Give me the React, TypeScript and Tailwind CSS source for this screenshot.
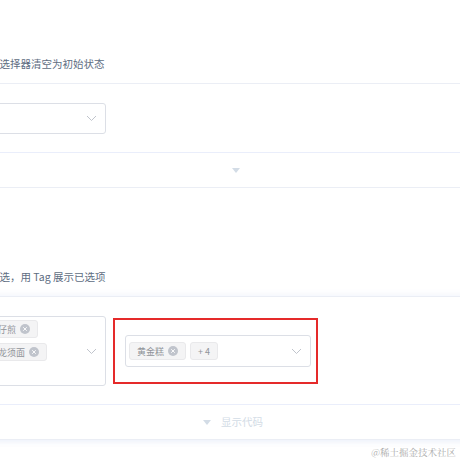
import React from 'react';

const border = 'border-[#ebeef5]';

function Chevron() {
  return (
    <svg width="11" height="7" viewBox="0 0 11 7" fill="none">
      <polyline points="1,1 5.5,5.5 10,1" stroke="#c0c4cc" strokeWidth="1" />
    </svg>
  );
}

function Tag({ label, closable = true }: { label: string; closable?: boolean }) {
  return (
    <span className="inline-flex items-center h-[18px] px-[7px] gap-[4px] rounded-[3px] border border-[#e9e9eb] bg-[#f4f4f5] text-[9px] leading-none text-[#909399] whitespace-nowrap">
      {label}
      {closable && (
        <span className="flex items-center justify-center w-[10px] h-[10px] rounded-full bg-[#c0c4cc]">
          <svg width="6" height="6" viewBox="0 0 6 6">
            <path d="M1.2 1.2L4.8 4.8M4.8 1.2L1.2 4.8" stroke="#fff" strokeWidth="0.9" />
          </svg>
        </span>
      )}
    </span>
  );
}

function ControlBar({ hover }: { hover?: boolean }) {
  return (
    <div className="h-[35px] border-t border-[#eaeefb] flex items-center justify-center">
      <div className={hover ? 'flex items-center gap-[10px] pr-[6px]' : 'flex items-center'}>
        <span className="w-0 h-0 border-l-[4px] border-r-[4px] border-t-[5px] border-l-transparent border-r-transparent border-t-[#d3dce6]" />
        {hover && <span className="text-[10.5px] leading-none text-[#d3dce6]">显示代码</span>}
      </div>
    </div>
  );
}

export default function App() {
  return (
    <div
      className="relative w-[460px] h-[460px] overflow-hidden bg-white"
      style={{ fontFamily: '"Noto Sans CJK SC", "Noto Sans", sans-serif' }}
    >
      <div className="ml-[-95px] w-[662px] pt-[55px]">
        <p className="text-[10.5px] leading-[18px] text-[#5e6d82] whitespace-nowrap">
          包含清空按钮，可将选择器清空为初始状态
        </p>
        <div className={`mt-[10px] border ${border} rounded-[3px]`}>
          <div className="pl-[12px] pt-[19px] pb-[18px]">
            <div className="w-[188px] h-[31px] border border-[#dcdfe6] rounded-[3px] flex items-center justify-end pr-[8px]">
              <Chevron />
            </div>
          </div>
          <ControlBar />
        </div>

        <p className="mt-[80px] text-[10.5px] leading-[18px] text-[#5e6d82] whitespace-nowrap">
          适用性较广的基础多选，用 Tag 展示已选项
        </p>
        <div
          className={`mt-[10px] border ${border} rounded-[3px] shadow-[0_0_8px_0_rgba(232,237,250,0.6),0_2px_4px_0_rgba(232,237,250,0.5)]`}
        >
          <div className="pl-[12px] pt-[19px] pb-[18px] flex items-center gap-[7px]">
            <div className="w-[188px] h-[70px] border border-[#dcdfe6] rounded-[3px] flex pl-[1px] pr-[8px] pt-[3px]">
              <div className="flex flex-wrap content-start gap-x-[4px] gap-y-[5px] w-[128px]">
                <Tag label="黄金糕" />
                <Tag label="蚵仔煎" />
                <Tag label="北京烤鸭" />
                <Tag label="龙须面" />
              </div>
              <div className="ml-auto flex items-center pb-[3px]">
                <Chevron />
              </div>
            </div>
            <div className="w-[205px] h-[66px] border-2 border-[#e52a2a] flex items-center pl-[10px]">
              <div className="w-[186px] h-[32px] border border-[#dcdfe6] rounded-[3px] flex items-center pl-[3px] pr-[8px] gap-[4px]">
                <Tag label="黄金糕" />
                <Tag label="+ 4" closable={false} />
                <div className="ml-auto">
                  <Chevron />
                </div>
              </div>
            </div>
          </div>
          <ControlBar hover />
        </div>
      </div>
      <span
        className="absolute right-[4px] top-[445px] text-[9.5px] leading-[14px] text-[#acacac] whitespace-nowrap"
        style={{ fontFamily: '"Noto Serif CJK SC", "Noto Sans CJK SC", serif' }}
      >
        @稀土掘金技术社区
      </span>
    </div>
  );
}
